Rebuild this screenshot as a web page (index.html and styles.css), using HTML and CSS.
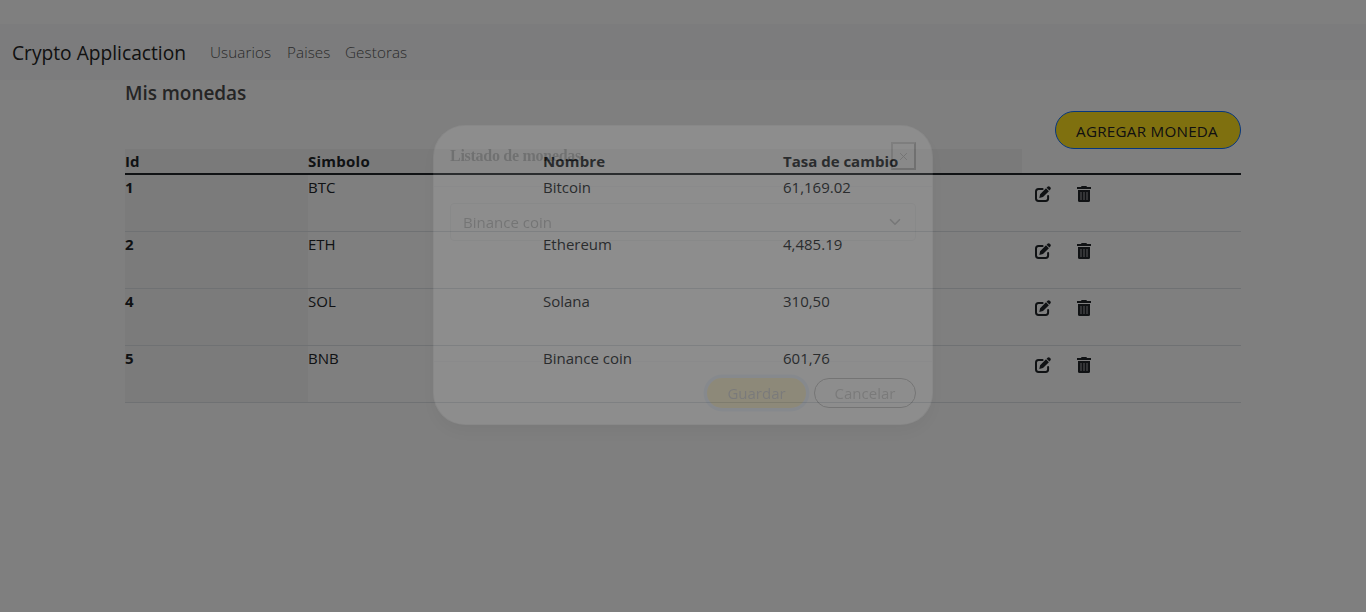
FILE: index.html
```html
<!DOCTYPE html>
<html lang="es">
<head>
<meta charset="utf-8">
<title>Crypto Applicaction</title>
<link rel="stylesheet" href="styles.css">
</head>
<body>
<svg class="sprite" aria-hidden="true">
  <symbol id="edit" viewBox="0 0 16 16"><path d="M7.600 2.900H3.500Q1 2.900 1 5.400v7.200q0 2.400 2.500 2.400h7.200q2.400 0 2.400-2.400V10" fill="none" stroke="currentColor" stroke-width="2" stroke-linecap="round"/><path d="M4.300 12l.8-3.800 5.900-5.900 2.900 2.900-5.900 5.900zM11.600 1.700l.9-.9q1.200-1 2.300 0l.5.5q1 1.100 0 2.300l-.9.9z" fill="currentColor"/></symbol>
  <symbol id="trash" viewBox="0 0 14 16"><path d="M0 1h4l.6-1h4.800l.6 1h4v2H0z" fill="currentColor"/><path d="M1 4h12v10.500q0 1.500-1.500 1.500h-9Q1 16 1 14.500z" fill="currentColor"/><path d="M4 6v8M7 6v8M10 6v8" stroke="#8c8e91" stroke-width="1.300"/></symbol>
</svg>
<nav class="navbar">
  <a class="brand">Crypto Applicaction</a>
  <a class="link users">Usuarios</a>
  <a class="link countries">Paises</a>
  <a class="link">Gestoras</a>
</nav>
<main class="container">
  <h1 class="title">Mis monedas</h1>
  <div class="toolbar"><button class="add">AGREGAR MONEDA</button></div>
  <div class="table">
    <div class="row head"><b>Id</b><b class="symbol-head">Simbolo</b><b class="name-head">Nombre</b><b>Tasa de cambio</b><span class="head-gap"></span></div>
    <div class="row"><b class="id">1</b><span>BTC</span><span>Bitcoin</span><span>61,169.02</span><span class="actions"><svg class="edit"><use href="#edit"/></svg><svg class="trash"><use href="#trash"/></svg></span></div>
    <div class="row"><b class="id">2</b><span>ETH</span><span>Ethereum</span><span>4,485.19</span><span class="actions"><svg class="edit"><use href="#edit"/></svg><svg class="trash"><use href="#trash"/></svg></span></div>
    <div class="row"><b class="id">4</b><span>SOL</span><span>Solana</span><span>310,50</span><span class="actions"><svg class="edit"><use href="#edit"/></svg><svg class="trash"><use href="#trash"/></svg></span></div>
    <div class="row"><b class="id">5</b><span>BNB</span><span>Binance coin</span><span>601,76</span><span class="actions"><svg class="edit"><use href="#edit"/></svg><svg class="trash"><use href="#trash"/></svg></span></div>
  </div>
</main>
<div class="backdrop"></div>
<div class="modal">
  <header class="modal-header"><span class="modal-title">Listado de monedas</span><button class="close"><svg viewBox="0 0 8 8"><path d="M1 1l6 6M7 1L1 7" stroke="#333" stroke-width=".8"/></svg></button></header>
  <div class="modal-body"><div class="select"><span>Binance coin</span><svg viewBox="0 0 16 16"><path d="M2 5l6 6 6-6" fill="none" stroke="#343a40" stroke-width="2.200" stroke-linecap="round" stroke-linejoin="round"/></svg></div></div>
  <footer class="modal-footer"><button class="save">Guardar</button><button class="cancel">Cancelar</button></footer>
</div>
</body>
</html>
```
FILE: styles.css
```css
* { box-sizing: border-box; }
body {
  margin: 0;
  padding-top: 24px;
  height: 612px;
  overflow: hidden;
  background: #fff;
  color: #212529;
  font: 400 15px/24px "Open Sans", "Noto Sans", sans-serif;
}
button { font: inherit; padding: 0; }
.sprite { display: none; }
.navbar {
  display: flex;
  align-items: center;
  height: 56px;
  padding-left: 12px;
  background: #f8f9fa;
}
.brand { width: 198px; font-size: 19.2px; color: #222; padding-top: 1px; }
.link { font-size: 15.2px; font-weight: 300; color: #555; letter-spacing: .1px; }
.users { width: 77px; }
.countries { width: 58px; }
.container { width: 1116px; margin-left: 125px; }
.title { margin: 0; padding-top: 1px; height: 31px; font-size: 19px; line-height: 24px; font-weight: 600; color: #4a4a4a; letter-spacing: -.05px; }
.toolbar { display: flex; justify-content: flex-end; height: 38px; }
.add {
  width: 186px;
  height: 38px;
  padding: 2px 2px 0 0;
  border: 1px solid #0d6efd;
  border-radius: 19px;
  background: #ffe01f;
  color: #222;
  font-size: 15.2px;
  font-weight: 500;
  letter-spacing: .25px;
}
.row {
  display: grid;
  grid-template-columns: 183px 235px 240px 239px 219px;
  height: 57px;
  border-bottom: 1px solid #dee2e6;
}
.row b { font-weight: 700; }
.head { height: 26px; border-bottom: 2px solid #212529; }
.head b { background: #f5f5f5; }
.head .symbol-head { letter-spacing: .25px; }
.head .name-head { letter-spacing: .15px; }
.head .head-gap { background: #fff; }
.id { background: #f7f7f7; }
.actions { display: flex; padding: 11px 0 0 13px; gap: 26px; }
.edit { width: 16px; height: 16px; }
.trash { width: 14px; height: 16px; }
.backdrop { position: fixed; inset: 0; background: rgba(0, 0, 0, .5); }
.modal {
  position: fixed;
  left: 433px;
  top: 125px;
  width: 500px;
  height: 300px;
  display: flex;
  flex-direction: column;
  border: 1px solid rgba(0, 0, 0, .2);
  border-radius: 32px;
  background: #fff;
  box-shadow: 0 8px 16px rgba(0, 0, 0, .35);
  opacity: .11;
}
.modal-header {
  display: flex;
  justify-content: space-between;
  height: 61px;
  padding: 16px;
  border-bottom: 1px solid #dee2e6;
}
.modal-title { font: 700 16px/28px "Liberation Serif", serif; letter-spacing: -.28px; }
.close {
  display: flex;
  align-items: center;
  justify-content: center;
  width: 25px;
  height: 28px;
  border: 2px outset #777;
  background: transparent;
}
.close svg { width: 9px; height: 9px; }
.modal-body { flex: 1; padding: 16px; }
.select {
  display: flex;
  align-items: center;
  justify-content: space-between;
  height: 38px;
  padding: 0 14px 0 12px;
  border: 1px solid #ced4da;
  border-radius: 4px;
}
.select svg { width: 12px; height: 12px; }
.modal-footer {
  display: flex;
  justify-content: flex-end;
  gap: 8px;
  height: 63px;
  padding: 16px;
  border-top: 1px solid #dee2e6;
}
.save, .cancel { height: 30px; border-radius: 15px; color: #555; }
.save { width: 99px; border: 0; background: #ffd84d; box-shadow: 0 0 0 3.5px rgba(49, 132, 253, .3); }
.cancel { width: 102px; border: 1px solid #222; background: transparent; }
```
